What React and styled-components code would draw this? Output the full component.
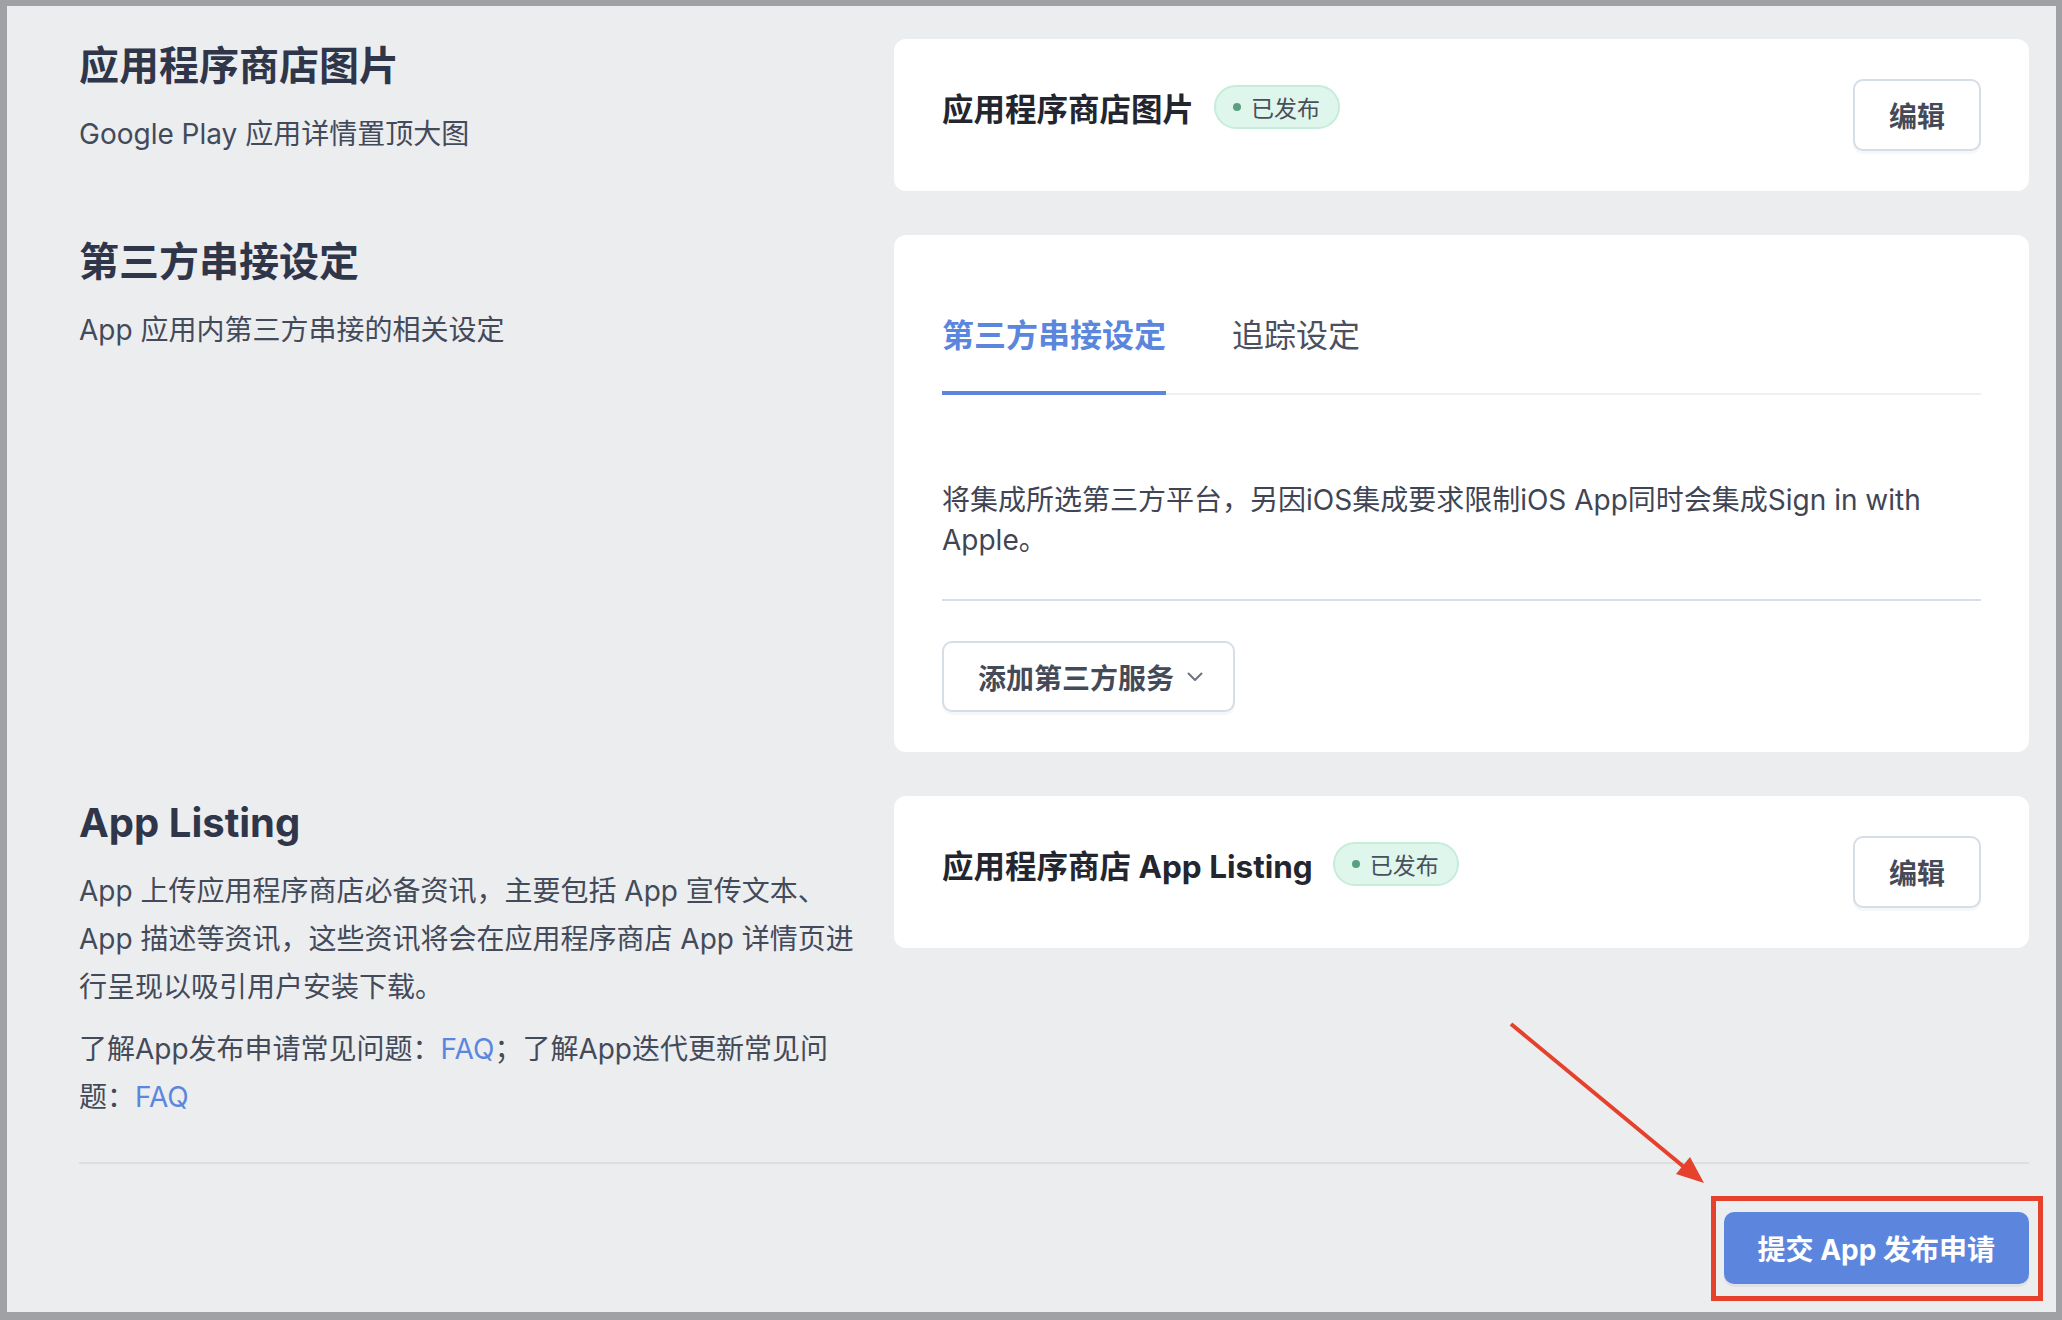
import React from 'react';
import styled, { createGlobalStyle } from 'styled-components';

const GlobalStyle = createGlobalStyle`
  html,
  body {
    margin: 0;
    padding: 0;
  }

  body {
    background: #a0a1a4;
    font-family: Inter, "Noto Sans CJK SC", sans-serif;
    -webkit-font-smoothing: antialiased;
  }

  * {
    box-sizing: border-box;
  }
`;

const Frame = styled.div`
  display: flex;
  min-height: 100vh;
  padding: 6px 6px 8px 7px;
`;

const Page = styled.main`
  flex: 1;
  background: #ecedef;
  padding: 33px 27px 27px 72px;
`;

const Section = styled.section`
  display: grid;
  grid-template-columns: 775px 1fr;
  column-gap: 40px;
  align-items: start;

  & + & {
    margin-top: 44px;
  }
`;

const Intro = styled.div`
  h2 {
    margin: 0;
    font-size: 40px;
    line-height: 53px;
    font-weight: 700;
    color: #30364a;
  }

  p {
    margin: 18px 0 0;
    font-size: 28px;
    line-height: 48px;
    color: #434a5a;

    + p {
      margin-top: 14px;
    }
  }

  a {
    color: #5b86de;
    text-decoration: none;
  }
`;

const Card = styled.div`
  background: #fff;
  border-radius: 12px;
  padding: 40px 48px;
`;

const CardHeader = styled.div`
  display: flex;
  justify-content: space-between;
  align-items: flex-start;
`;

const CardTitle = styled.div`
  display: flex;
  align-items: center;
  gap: 20px;
  height: 56px;

  h3 {
    margin: 0;
    font-size: 31.5px;
    font-weight: 700;
    color: #23262f;
  }
`;

const Badge = styled.span`
  display: inline-flex;
  align-items: center;
  gap: 10px;
  height: 44px;
  padding: 0 18px 0 17px;
  border: 2px solid #c6ecda;
  border-radius: 22px;
  background: #dff6ec;
  font-size: 23px;
  color: #4a4f5c;

  &::before {
    content: '';
    width: 8px;
    height: 8px;
    border-radius: 50%;
    background: #5a9f80;
  }
`;

const OutlineButton = styled.button`
  display: inline-flex;
  align-items: center;
  gap: 13px;
  height: ${(p) => p.$height || 72}px;
  padding: 0 ${(p) => p.$padRight || 34}px 0 34px;
  border: 2px solid #d5dde6;
  border-radius: 10px;
  background: #fff;
  box-shadow: 0 3px 0 rgba(30, 40, 60, 0.04);
  font-family: inherit;
  font-size: 28px;
  font-weight: 600;
  color: #454a58;
  cursor: pointer;
`;

const TabList = styled.div`
  display: flex;
  gap: 66px;
  border-bottom: 2px solid #eef0f2;
`;

const Tab = styled.div`
  padding: 39px 0 33px;
  margin-bottom: -2px;
  border-bottom: 4px solid ${(p) => (p.$active ? '#5b86de' : 'transparent')};
  font-size: 32px;
  line-height: 44px;
  font-weight: ${(p) => (p.$active ? 700 : 400)};
  color: ${(p) => (p.$active ? '#5b86de' : '#4a5060')};
`;

const TabNote = styled.p`
  margin: 85px 0 0;
  padding-bottom: 39px;
  border-bottom: 2px solid #d7dee6;
  font-size: 28px;
  line-height: 40px;
  color: #3f4554;
`;

const Actions = styled.div`
  margin-top: 40px;
`;

const Footer = styled.footer`
  margin-top: 41px;
  padding-top: 48px;
  border-top: 2px solid #dcdee2;
  display: flex;
  justify-content: flex-end;
`;

const SubmitWrap = styled.div`
  position: relative;
`;

const SubmitButton = styled.button`
  height: 72px;
  padding: 0 34px;
  border: 0;
  border-radius: 10px;
  background: #5c86de;
  box-shadow: 0 3px 0 rgba(30, 40, 60, 0.06);
  font-family: inherit;
  font-size: 28px;
  font-weight: 700;
  color: #fff;
  cursor: pointer;
`;

/* annotation drawn over the screenshot */
const Highlight = styled.span`
  position: absolute;
  inset: -16px -14px -17px -13px;
  border: 5px solid #e5412c;
  pointer-events: none;
`;

const Arrow = styled.svg`
  position: absolute;
  left: -221px;
  top: -195px;
  width: 210px;
  height: 172px;
  overflow: visible;
  pointer-events: none;
`;

function Chevron() {
  return (
    <svg width="16" height="10" viewBox="0 0 16 10" fill="none">
      <polyline
        points="1.5,1.5 8,8 14.5,1.5"
        stroke="#6b7280"
        strokeWidth="2"
        strokeLinecap="round"
        strokeLinejoin="round"
      />
    </svg>
  );
}

export default function App() {
  return (
    <>
      <GlobalStyle />
      <Frame>
        <Page>
          <Section>
            <Intro>
              <h2>应用程序商店图片</h2>
              <p>Google Play 应用详情置顶大图</p>
            </Intro>
            <Card>
              <CardHeader>
                <CardTitle>
                  <h3>应用程序商店图片</h3>
                  <Badge>已发布</Badge>
                </CardTitle>
                <OutlineButton>编辑</OutlineButton>
              </CardHeader>
            </Card>
          </Section>

          <Section>
            <Intro>
              <h2>第三方串接设定</h2>
              <p>App 应用内第三方串接的相关设定</p>
            </Intro>
            <Card>
              <TabList>
                <Tab $active>第三方串接设定</Tab>
                <Tab>追踪设定</Tab>
              </TabList>
              <TabNote>
                将集成所选第三方平台，另因iOS集成要求限制iOS App同时会集成Sign in with
                Apple。
              </TabNote>
              <Actions>
                <OutlineButton $height={71} $padRight={30}>
                  添加第三方服务
                  <Chevron />
                </OutlineButton>
              </Actions>
            </Card>
          </Section>

          <Section>
            <Intro>
              <h2>App Listing</h2>
              <p>
                App 上传应用程序商店必备资讯，主要包括 App 宣传文本、App
                描述等资讯，这些资讯将会在应用程序商店 App 详情页进行呈现以吸引用户安装下载。
              </p>
              <p>
                了解App发布申请常见问题：<a href="#faq">FAQ</a>；了解App迭代更新常见问题：
                <a href="#faq">FAQ</a>
              </p>
            </Intro>
            <Card>
              <CardHeader>
                <CardTitle>
                  <h3>应用程序商店 App Listing</h3>
                  <Badge>已发布</Badge>
                </CardTitle>
                <OutlineButton>编辑</OutlineButton>
              </CardHeader>
            </Card>
          </Section>

          <Footer>
            <SubmitWrap>
              <SubmitButton>提交 App 发布申请</SubmitButton>
              <Highlight />
              <Arrow viewBox="0 0 210 172">
                <line x1="8" y1="7" x2="181" y2="150" stroke="#e5412c" strokeWidth="4" />
                <polygon points="201,166 173,157 187,140" fill="#e5412c" />
              </Arrow>
            </SubmitWrap>
          </Footer>
        </Page>
      </Frame>
    </>
  );
}
